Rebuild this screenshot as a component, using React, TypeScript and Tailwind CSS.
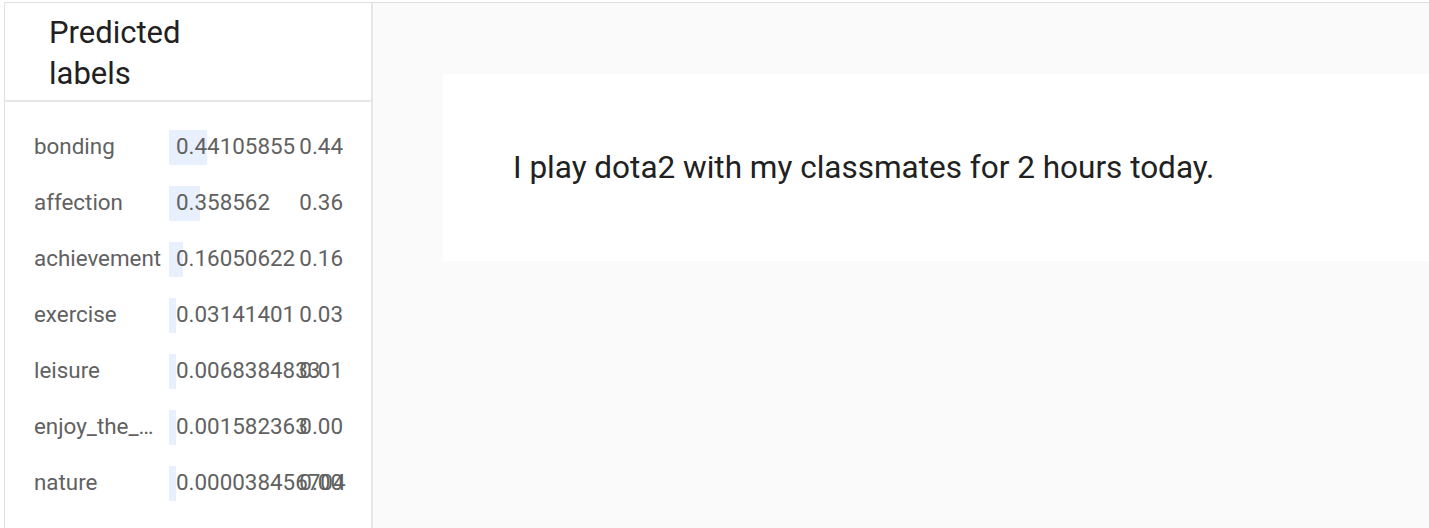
import React from "react";

type Row = { label: string; raw: string; rounded: string; value: number };

const rows: Row[] = [
  { label: "bonding", raw: "0.44105855", rounded: "0.44", value: 0.44105855 },
  { label: "affection", raw: "0.358562", rounded: "0.36", value: 0.358562 },
  { label: "achievement", raw: "0.16050622", rounded: "0.16", value: 0.16050622 },
  { label: "exercise", raw: "0.03141401", rounded: "0.03", value: 0.03141401 },
  { label: "leisure", raw: "0.0068384833", rounded: "0.01", value: 0.0068384833 },
  { label: "enjoy_the_moment", raw: "0.001582363", rounded: "0.00", value: 0.001582363 },
  { label: "nature", raw: "0.000038456704", rounded: "0.00", value: 0.000038456704 },
];

function LabelRow({ row }: { row: Row }) {
  // bar never goes below ~7px so tiny scores still show
  const barWidth = Math.max(row.value * 86, 7);
  return (
    <div className="flex flex-row items-center h-[56px] text-[22.4px] text-[#616161] whitespace-nowrap">
      <div className="w-[128px] mr-[7px] overflow-hidden text-ellipsis">{row.label}</div>
      <div className="relative w-[130px] h-[35px] flex items-center">
        <div className="absolute left-0 top-0 h-full bg-[#e8f0fe]" style={{ width: barWidth }} />
        <span className="relative pl-[7px]">{row.raw}</span>
      </div>
      <div className="w-[44px] text-right">{row.rounded}</div>
    </div>
  );
}

export default function App() {
  return (
    <div className="w-[1429px] h-[528px] overflow-hidden bg-white pt-[2px] pl-[4px]" style={{ fontFamily: "Roboto, 'Liberation Sans', sans-serif" }}>
      <div className="flex flex-row h-[560px] border-t border-l border-[#e0e0e0]">
        <div className="w-[368px] shrink-0 flex flex-col bg-white border-r-2 border-[#e6e6e6]">
          <div className="pl-[44px] pt-[9px] pb-[6px] border-b-2 border-[#e6e6e6]">
            <h1 className="w-[160px] text-[31px] leading-[41px] text-[#212121]">Predicted labels</h1>
          </div>
          <div className="flex flex-col pt-[17px] pl-[29px]">
            {rows.map((r) => (
              <LabelRow key={r.label} row={r} />
            ))}
          </div>
        </div>
        <div className="flex-1 bg-[#fafafa] pt-[71px] pl-[70px] overflow-hidden">
          <div className="w-[1100px] h-[187px] bg-white flex items-center pl-[70px]">
            <p className="text-[31.5px] text-[#212121] whitespace-nowrap">I play dota2 with my classmates for 2 hours today.</p>
          </div>
        </div>
      </div>
    </div>
  );
}
